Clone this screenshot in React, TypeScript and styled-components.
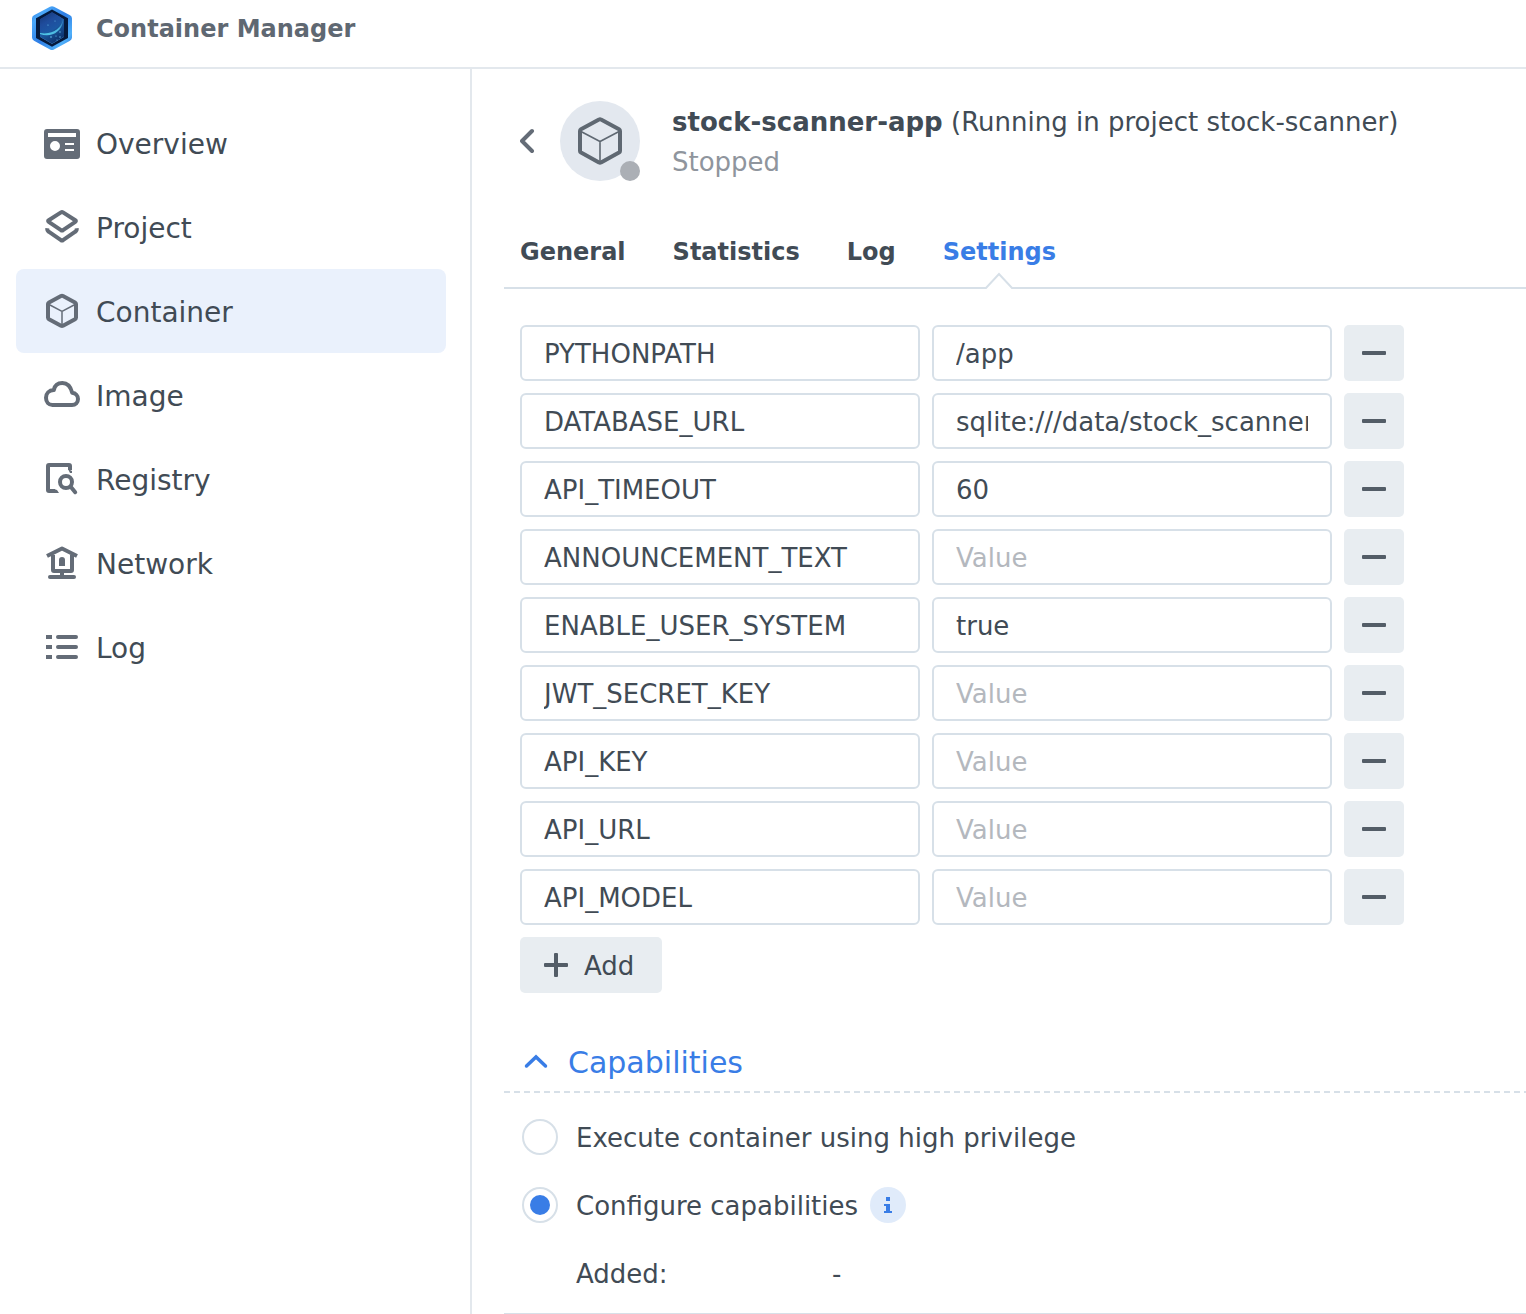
import React, { useState } from "react";
import styled, { createGlobalStyle } from "styled-components";

const color = {
  text: "#414b55",
  icon: "#646c77",
  muted: "#8f959d",
  placeholder: "#b4b8be",
  line: "#d7e0e8",
  blue: "#397de6",
  fill: "#e8edf1",
};

const GlobalStyle = createGlobalStyle`
  * { box-sizing: border-box; }
  body { margin: 0; background: #fff; }
  body, button, input {
    font-family: Verdana, "DejaVu Sans", sans-serif;
    font-size: 26px;
    color: ${color.text};
  }
  button { border: 0; padding: 0; background: none; cursor: pointer; }
`;

const Page = styled.div`
  min-height: 100vh;
  display: flex;
  flex-direction: column;
`;

const TopBar = styled.header`
  display: flex;
  align-items: center;
  gap: 24px;
  padding: 5px 32px 14px;
  border-bottom: 2px solid #e3e8ed;
`;

const AppTitle = styled.h1`
  margin: 0;
  font-size: 24px;
  line-height: 48px;
  color: #5f6872;
`;

const Body = styled.div`
  flex: 1;
  display: flex;
`;

const Sidebar = styled.nav`
  flex: 0 0 472px;
  display: flex;
  flex-direction: column;
  padding: 32px 24px 32px 16px;
  border-right: 2px solid #e3e8ed;
`;

const NavItem = styled.a<{ $active: boolean }>`
  display: flex;
  align-items: center;
  gap: 16px;
  height: 84px;
  padding: 0 28px;
  border-radius: 8px;
  font-size: 28px;
  color: ${color.text};
  text-decoration: none;
  background: ${(p) => (p.$active ? "#eaf1fc" : "transparent")};
`;

const Caption = styled.span`
  padding-top: 2px;
`;

const Main = styled.main`
  flex: 1;
  min-width: 0;
  padding: 32px 0 0 32px;
`;

const Heading = styled.section`
  display: flex;
  align-items: center;
  height: 80px;
  padding-left: 16px;
`;

const BackButton = styled.button`
  display: flex;
  width: 40px;
`;

const Avatar = styled.div`
  position: relative;
  display: flex;
  align-items: center;
  justify-content: center;
  width: 80px;
  height: 80px;
  margin-right: 32px;
  border-radius: 50%;
  background: #e3e8ef;
`;

const StatusDot = styled.span`
  position: absolute;
  right: 0;
  bottom: 0;
  width: 20px;
  height: 20px;
  border-radius: 50%;
  background: #abafb5;
`;

const HeadingText = styled.div`
  padding-top: 2px;
  line-height: 40px;
  white-space: nowrap;
`;

const Name = styled.h2`
  display: inline;
  margin: 0;
  font-size: 26px;
`;

const Status = styled.div`
  color: ${color.muted};
`;

const Tabs = styled.div`
  display: flex;
  gap: 47px;
  margin-top: 32px;
  padding-left: 16px;
  border-bottom: 2px solid ${color.line};
`;

const Tab = styled.button<{ $active: boolean }>`
  position: relative;
  height: 74px;
  padding-top: 4px;
  font-size: 24px;
  font-weight: bold;
  color: ${(p) => (p.$active ? color.blue : color.text)};
`;

const TabCaret = styled.svg`
  position: absolute;
  left: 50%;
  bottom: -2px;
  margin-left: -14px;
`;

const Variables = styled.div`
  display: flex;
  flex-direction: column;
  align-items: flex-start;
  gap: 12px;
  padding: 36px 16px 0;
`;

const VariableRow = styled.div`
  display: flex;
  gap: 12px;
`;

const TextBox = styled.input`
  width: 400px;
  height: 56px;
  padding: 2px 22px 0;
  border: 2px solid ${color.line};
  border-radius: 6px;
  background: #fff;
  outline: none;
  &::placeholder { color: ${color.placeholder}; opacity: 1; }
  &:focus { border-color: ${color.blue}; }
`;

const FillButton = styled.button`
  display: flex;
  align-items: center;
  justify-content: center;
  gap: 16px;
  min-width: 60px;
  height: 56px;
  border-radius: 5px;
  background: ${color.fill};
`;

const AddButton = styled(FillButton)`
  padding: 0 28px 0 24px;
`;

const SectionToggle = styled.button`
  display: flex;
  align-items: center;
  gap: 20px;
  width: 100%;
  height: 60px;
  margin-top: 38px;
  padding-left: 20px;
  font-size: 30px;
  color: ${color.blue};
`;

const DashedLine = styled.div`
  height: 2px;
  background: repeating-linear-gradient(to right, ${color.line} 0 6px, transparent 6px 10px);
`;

const Options = styled.div`
  display: flex;
  flex-direction: column;
  gap: 32px;
  padding: 26px 18px 22px;
  border-bottom: 1px solid ${color.line};
`;

const OptionRow = styled.div`
  display: flex;
  align-items: center;
  gap: 12px;
  height: 36px;
`;

const OptionLabel = styled.label`
  display: flex;
  align-items: center;
  gap: 18px;
`;

const Radio = styled.input`
  appearance: none;
  display: grid;
  place-items: center;
  width: 36px;
  height: 36px;
  margin: 0;
  border: 2px solid ${color.line};
  border-radius: 50%;
  background: #fff;
  &:checked::before {
    content: "";
    width: 20px;
    height: 20px;
    border-radius: 50%;
    background: ${color.blue};
  }
`;

const InfoButton = styled.button`
  display: flex;
  align-items: center;
  justify-content: center;
  width: 36px;
  height: 36px;
  border-radius: 50%;
  background: #e0ebfa;
`;

const DetailRow = styled.dl`
  display: grid;
  grid-template-columns: 256px 1fr;
  align-items: center;
  height: 36px;
  margin: 0;
  padding: 2px 0 0 54px;
  dd { margin: 0; }
`;

const Icon = ({ children }: { children: React.ReactNode }) => (
  <svg width="36" height="36" viewBox="0 0 36 36" fill="none" stroke={color.icon} strokeWidth="4" strokeLinejoin="round" aria-hidden="true">
    {children}
  </svg>
);

const Logo = () => (
  <svg width="40" height="46" viewBox="0 1 40 46" aria-hidden="true">
    <defs>
      <linearGradient id="rim" x1="0" y1="0" x2="1" y2="1">
        <stop offset="0" stopColor="#2c78dc" />
        <stop offset=".2" stopColor="#4ba9fa" />
        <stop offset=".5" stopColor="#2d7de5" />
        <stop offset=".8" stopColor="#50b0fa" />
        <stop offset="1" stopColor="#2268d5" />
      </linearGradient>
      <linearGradient id="space" x1="0" y1="0" x2=".5" y2="1">
        <stop offset="0" stopColor="#173b80" />
        <stop offset=".6" stopColor="#1d5ca4" />
        <stop offset="1" stopColor="#0d3470" />
      </linearGradient>
      <linearGradient id="planet" x1="0" y1="0" x2=".6" y2="1">
        <stop offset="0" stopColor="#14336f" />
        <stop offset=".5" stopColor="#1f4c9c" />
        <stop offset="1" stopColor="#1b5aa6" />
      </linearGradient>
      <linearGradient id="arc" x1="0" y1="1" x2="1" y2="0">
        <stop offset="0" stopColor="#50c8e8" />
        <stop offset=".55" stopColor="#4cb6df" />
        <stop offset="1" stopColor="#2866ad" />
      </linearGradient>
      <clipPath id="window"><path d="M20 7 32 14V32L20 39 8 32V14Z" /></clipPath>
    </defs>
    <path d="M18 1.7Q20 .6 22 1.7L38 10.3Q40 11.4 40 13.5V32.5Q40 34.6 38 35.7L22 44.4Q20 45.5 18 44.4L2 35.7Q0 34.6 0 32.5V13.5Q0 11.4 2 10.3Z" fill="url(#rim)" />
    <path d="M20 4.5 36 13.2V33L20 41.7 4 33V13.2Z" fill="#051a3d" />
    <g clipPath="url(#window)">
      <path d="M20 7 32 14V32L20 39 8 32V14Z" fill="url(#space)" />
      <path d="M8 14 20 7 29 12C31 20 20 29 8 27Z" fill="url(#planet)" />
      <path d="M8 28C20 30 30 24 31 13V17C29 27 19 33 8 29Z" fill="url(#arc)" />
      <path d="M8 32 20 39 32 32" fill="none" stroke="#3975b7" strokeWidth="1" />
    </g>
    <g fill="#6cc3ee">
      <circle cx="16" cy="20" r=".6" /><circle cx="23" cy="16" r=".5" />
      <circle cx="19" cy="32" r=".8" /><circle cx="24" cy="31" r=".6" />
      <circle cx="28" cy="27" r=".7" /><circle cx="25" cy="35" r=".6" />
      <circle cx="28" cy="32" r=".7" />
    </g>
  </svg>
);

const Cube = ({ size, scale }: { size: number; scale: "small" | "large" }) => (
  scale === "small" ? (
    <svg width={size} height={size} viewBox="0 0 36 36" fill="none" stroke={color.icon} strokeLinejoin="round" aria-hidden="true">
      <path d="M17 3Q18 2.5 19 3L31 9.4Q32 10 32 11V24.6Q32 25.6 31 26.2L19 32.8Q18 33.3 17 32.8L5 26.2Q4 25.6 4 24.6V11Q4 10 5 9.4Z" strokeWidth="4" />
      <path d="M5 11.5 18 18.3 31 11.5M18 18V32" strokeWidth="1.5" />
    </svg>
  ) : (
    <svg width={size} height={size} viewBox="0 0 48 48" fill="none" stroke="#5f6872" strokeLinejoin="round" aria-hidden="true">
      <path d="M23 2.6Q24 2 25 2.6L43 12.2Q44 12.8 44 14V34Q44 35 43 35.6L25 45.4Q24 46 23 45.4L5 35.6Q4 35 4 34V14Q4 12.8 5 12.2Z" strokeWidth="4" />
      <path d="M5 14.5 24 24.5 43 14.5M24 24V45" strokeWidth="1.6" />
    </svg>
  )
);

const navigation: { label: string; icon: React.ReactNode }[] = [
  {
    label: "Overview",
    icon: (
      <Icon>
        <path
          d="M3 4H33A3 3 0 0 1 36 7V31A3 3 0 0 1 33 34H3A3 3 0 0 1 0 31V7A3 3 0 0 1 3 4ZM4 8V12H32V8ZM11 16A5 5 0 1 0 11 26A5 5 0 1 0 11 16ZM21 18V20H30V18ZM21 24V26H30V24Z"
          fill={color.icon}
          fillRule="evenodd"
          stroke="none"
        />
      </Icon>
    ),
  },
  {
    label: "Project",
    icon: (
      <Icon>
        <path d="M17 3.4Q18 2.8 19 3.4L31.3 11.2Q32.5 12 31.3 12.8L19 21.2Q18 21.8 17 21.2L4.7 12.8Q3.5 12 4.7 11.2Z" />
        <path d="M3.3 19.3Q3 21.6 4.7 22.7L17 31.2Q18 31.8 19 31.2L31.3 22.7Q33 21.6 32.7 19.3" />
      </Icon>
    ),
  },
  { label: "Container", icon: <Cube size={36} scale="small" /> },
  {
    label: "Image",
    icon: (
      <Icon>
        <path d="M8.5 28H28C31.5 28 34 25.4 34 22C34 18.8 31.6 16.2 28.2 15.8C26.6 9.5 23.4 6 18.4 6C13.6 6 10.6 9 9.8 13C5 13.2 2 16.4 2 20.8C2 25 4.6 28 8.5 28Z" />
      </Icon>
    ),
  },
  {
    label: "Registry",
    icon: (
      <Icon>
        <path d="M26 9V5Q26 4 25 4H5Q4 4 4 5V29Q4 30 5 30H11" />
        <path d="M24 8 28 10V12H26ZM10 28 13 29 15 32H10Z" fill={color.icon} stroke="none" />
        <circle cx="22" cy="21" r="6" />
        <path d="M26.5 25.5 31.2 31.2" strokeLinecap="round" />
      </Icon>
    ),
  },
  {
    label: "Network",
    icon: (
      <Icon>
        <path d="M3 11 18 3.5 33 11M9 10V25Q9 26 10 26H27Q28 26 28 25V10" />
        <path d="M18 26V32" />
        <path d="M6 32H30" strokeLinecap="round" />
        <path d="M15 21V15Q15 12 18 12T21 15V21Z" fill={color.icon} stroke="none" />
      </Icon>
    ),
  },
  {
    label: "Log",
    icon: (
      <Icon>
        <path d="M2 8H8M2 18H8M2 28H8" />
        <path d="M14 8H32M14 18H32M14 28H32" strokeLinecap="round" />
      </Icon>
    ),
  },
];

const initialVariables = [
  ["PYTHONPATH", "/app"],
  ["DATABASE_URL", "sqlite:///data/stock_scanner.db"],
  ["API_TIMEOUT", "60"],
  ["ANNOUNCEMENT_TEXT", ""],
  ["ENABLE_USER_SYSTEM", "true"],
  ["JWT_SECRET_KEY", ""],
  ["API_KEY", ""],
  ["API_URL", ""],
  ["API_MODEL", ""],
].map(([key, value], id) => ({ id, key, value }));

const tabs = ["General", "Statistics", "Log", "Settings"];

export default function App() {
  const [section, setSection] = useState("Container");
  const [tab, setTab] = useState("Settings");
  const [variables, setVariables] = useState(initialVariables);
  const [open, setOpen] = useState(true);

  const update = (id: number, field: "key" | "value", text: string) =>
    setVariables((all) => all.map((v) => (v.id === id ? { ...v, [field]: text } : v)));

  return (
    <Page>
      <GlobalStyle />
      <TopBar>
        <Logo />
        <AppTitle>Container Manager</AppTitle>
      </TopBar>
      <Body>
        <Sidebar>
          {navigation.map(({ label, icon }) => (
            <NavItem key={label} href={`#${label.toLowerCase()}`} $active={section === label} onClick={() => setSection(label)}>
              {icon}
              <Caption>{label}</Caption>
            </NavItem>
          ))}
        </Sidebar>
        <Main>
          <Heading>
            <BackButton aria-label="Back">
              <svg width="16" height="26" viewBox="0 0 16 26" fill="none" stroke={color.icon} strokeWidth="4" strokeLinecap="round" strokeLinejoin="round">
                <path d="M12 3 2 13 12 23" />
              </svg>
            </BackButton>
            <Avatar>
              <Cube size={48} scale="large" />
              <StatusDot />
            </Avatar>
            <HeadingText>
              <div>
                <Name>stock-scanner-app</Name> (Running in project stock-scanner)
              </div>
              <Status>Stopped</Status>
            </HeadingText>
          </Heading>
          <Tabs role="tablist">
            {tabs.map((name) => (
              <Tab key={name} role="tab" aria-selected={tab === name} $active={tab === name} onClick={() => setTab(name)}>
                {name}
                {tab === name && (
                  <TabCaret width="28" height="17" viewBox="0 0 28 17">
                    <path d="M0 17 14 2 28 17Z" fill="#fff" />
                    <path d="M0 16H1L14 2 27 16H28" fill="none" stroke={color.line} strokeWidth="2" />
                  </TabCaret>
                )}
              </Tab>
            ))}
          </Tabs>
          <Variables>
            {variables.map((v) => (
              <VariableRow key={v.id}>
                <TextBox aria-label="Variable" placeholder="Variable" value={v.key} onChange={(e) => update(v.id, "key", e.target.value)} />
                <TextBox aria-label={`Value of ${v.key}`} placeholder="Value" value={v.value} onChange={(e) => update(v.id, "value", e.target.value)} />
                <FillButton aria-label={`Remove ${v.key}`} onClick={() => setVariables((all) => all.filter((x) => x.id !== v.id))}>
                  <svg width="24" height="24" viewBox="0 0 24 24">
                    <rect y="10" width="24" height="4" rx="1" fill="#535d67" />
                  </svg>
                </FillButton>
              </VariableRow>
            ))}
            <AddButton onClick={() => setVariables((all) => [...all, { id: Date.now(), key: "", value: "" }])}>
              <svg width="24" height="24" viewBox="0 0 24 24" fill="#535d67" aria-hidden="true">
                <rect y="10" width="24" height="4" rx="1" />
                <rect x="10" width="4" height="24" rx="1" />
              </svg>
              <Caption>Add</Caption>
            </AddButton>
          </Variables>
          <SectionToggle aria-expanded={open} onClick={() => setOpen(!open)}>
            <svg width="24" height="16" viewBox="0 0 24 16" fill="none" stroke={color.blue} strokeWidth="3.5" strokeLinecap="round" aria-hidden="true">
              <path d="M2.5 13 12 4 21.5 13" />
            </svg>
            <Caption>Capabilities</Caption>
          </SectionToggle>
          <DashedLine />
          {open && (
            <Options>
              <OptionRow>
                <OptionLabel>
                  <Radio type="radio" name="privilege" />
                  <Caption>Execute container using high privilege</Caption>
                </OptionLabel>
              </OptionRow>
              <OptionRow>
                <OptionLabel>
                  <Radio type="radio" name="privilege" defaultChecked />
                  <Caption>Configure capabilities</Caption>
                </OptionLabel>
                <InfoButton aria-label="About capabilities">
                  <svg width="8" height="16" viewBox="0 0 8 16" fill={color.blue}>
                    <path d="M2 0H6V4H2ZM0 7H6V14H8V16H0V14H2V9H0Z" />
                  </svg>
                </InfoButton>
              </OptionRow>
              <DetailRow>
                <dt>Added:</dt>
                <dd>-</dd>
              </DetailRow>
            </Options>
          )}
        </Main>
      </Body>
    </Page>
  );
}
